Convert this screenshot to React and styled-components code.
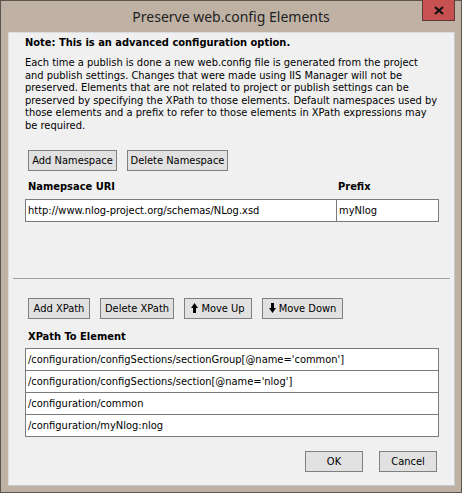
import React from 'react'
import styled, { createGlobalStyle } from 'styled-components'

const Global = createGlobalStyle`
    html, body {
        margin: 0;
        padding: 0;
        background: #bdb0a3;
    }
`

const Window = styled.div`
    box-sizing: border-box;
    width: 462px;
    height: 493px;
    background: #bfb2a5;
    border: 1px solid #5b5550;
    display: flex;
    flex-direction: column;
`

const TitleBar = styled.div`
    position: relative;
    height: 30px;
    display: flex;
    align-items: center;
    justify-content: center;
    font-family: "Noto Sans", sans-serif;
    font-size: 14px;
    color: #1e1e1e;
    padding-bottom: 1px;
`

const CloseButton = styled.div`
    position: absolute;
    top: -1px;
    right: 6px;
    width: 31px;
    height: 20px;
    background: #c75050;
    border: 1px solid #5e3a36;
    border-top: none;
    display: flex;
    align-items: center;
    justify-content: center;
`

const Client = styled.div`
    box-sizing: border-box;
    margin: 0 6px 0 7px;
    height: 454px;
    background: #f0f0f0;
    border: 1px solid #d9dce0;
    border-right-color: #c4c9cf;
    border-bottom-color: #c4c9cf;
    font-family: "DejaVu Sans Condensed", "DejaVu Sans", sans-serif;
    font-size: 11px;
    color: #000;
    display: flex;
    flex-direction: column;
    padding: 3px 16px 0 16px;
`

const Note = styled.div`
    font-weight: bold;
    line-height: 13px;
`

const Paragraph = styled.p`
    margin: 8px 0 0 0;
    line-height: 12.6px;
    white-space: nowrap;
`

const ButtonRow = styled.div`
    display: flex;
    gap: ${p => p.gap || 10}px;
    margin: ${p => p.top}px 0 0 3px;
`

const Button = styled.button`
    box-sizing: border-box;
    height: 21px;
    width: ${p => p.w}px;
    padding: 0;
    background: #e1e1e1;
    border: 1px solid #7f7f7f;
    font-family: "DejaVu Sans Condensed", "DejaVu Sans", sans-serif;
    font-size: 11px;
    color: #000;
    display: flex;
    align-items: center;
    justify-content: center;
    gap: 3px;
`

const HeaderRow = styled.div`
    display: flex;
    margin: ${p => p.top}px 0 0 3px;
    font-weight: bold;
    line-height: 13px;
`

const HeaderCell = styled.div`
    width: ${p => p.w ? p.w + 'px' : 'auto'};
`

const Table = styled.div`
    box-sizing: border-box;
    width: 414px;
    margin-top: ${p => p.top}px;
    border: 1px solid #7a7a7a;
    background: #fff;
`

const Row = styled.div`
    display: flex;
    height: 21px;
    border-top: ${p => p.first ? 'none' : '1px solid #7a7a7a'};
`

const Cell = styled.div`
    box-sizing: border-box;
    width: ${p => p.w ? p.w + 'px' : 'auto'};
    flex: ${p => p.w ? 'none' : 1};
    padding-left: 2px;
    display: flex;
    align-items: center;
    border-left: ${p => p.divider ? '1px solid #7a7a7a' : 'none'};
    white-space: nowrap;
`

const Separator = styled.div`
    height: 1px;
    background: #a0a0a0;
    margin: 56px -12px 0 -12px;
`

const Footer = styled.div`
    display: flex;
    justify-content: flex-end;
    gap: 16px;
    margin: 14px 1px 0 0;
`

const Arrow = ({ down }) => (
    <svg width="7" height="10" viewBox="0 0 7 10">
        <polygon
            points={down ? '2,0 5,0 5,5 7,5 3.5,10 0,5 2,5' : '3.5,0 7,5 5,5 5,10 2,10 2,5 0,5'}
            fill="#000"
        />
    </svg>
)

const paragraph = [
    'Each time a publish is done a new web.config file is generated from the project',
    'and publish settings. Changes that were made using IIS Manager will not be',
    'preserved. Elements that are not related to project or publish settings can be',
    'preserved by specifying the XPath to those elements. Default namespaces used by',
    'those elements and a prefix to refer to those elements in XPath expressions may',
    'be required.',
]

const xpaths = [
    "/configuration/configSections/sectionGroup[@name='common']",
    "/configuration/configSections/section[@name='nlog']",
    '/configuration/common',
    '/configuration/myNlog:nlog',
]

const App = () => {
    return (
        <>
            <Global />
            <Window>
                <TitleBar>
                    Preserve web.config Elements
                    <CloseButton>
                        <svg width="10" height="9" viewBox="0 0 10 9">
                            <path d="M1 1 L9 8 M9 1 L1 8" stroke="#111" strokeWidth="2.2" />
                        </svg>
                    </CloseButton>
                </TitleBar>
                <Client>
                    <Note>Note: This is an advanced configuration option.</Note>
                    <Paragraph>
                        {paragraph.map((line, i) => (
                            <React.Fragment key={i}>{line}{i < paragraph.length - 1 && <br />}</React.Fragment>
                        ))}
                    </Paragraph>
                    <ButtonRow top={17}>
                        <Button w={89}>Add Namespace</Button>
                        <Button w={101}>Delete Namespace</Button>
                    </ButtonRow>
                    <HeaderRow top={9}>
                        <HeaderCell w={310}>Namepsace URI</HeaderCell>
                        <HeaderCell>Prefix</HeaderCell>
                    </HeaderRow>
                    <Table top={6}>
                        <Row first>
                            <Cell w={310}>http://www.nlog-project.org/schemas/NLog.xsd</Cell>
                            <Cell divider>myNlog</Cell>
                        </Row>
                    </Table>
                    <Separator />
                    <ButtonRow top={19}>
                        <Button w={62}>Add XPath</Button>
                        <Button w={74}>Delete XPath</Button>
                        <Button w={68}><Arrow />Move Up</Button>
                        <Button w={81}><Arrow down />Move Down</Button>
                    </ButtonRow>
                    <HeaderRow top={11}>
                        <HeaderCell>XPath To Element</HeaderCell>
                    </HeaderRow>
                    <Table top={5}>
                        {xpaths.map((x, i) => (
                            <Row key={x} first={i === 0}>
                                <Cell>{x}</Cell>
                            </Row>
                        ))}
                    </Table>
                    <Footer>
                        <Button w={58}>OK</Button>
                        <Button w={58}>Cancel</Button>
                    </Footer>
                </Client>
            </Window>
        </>
    )
}

export default App
